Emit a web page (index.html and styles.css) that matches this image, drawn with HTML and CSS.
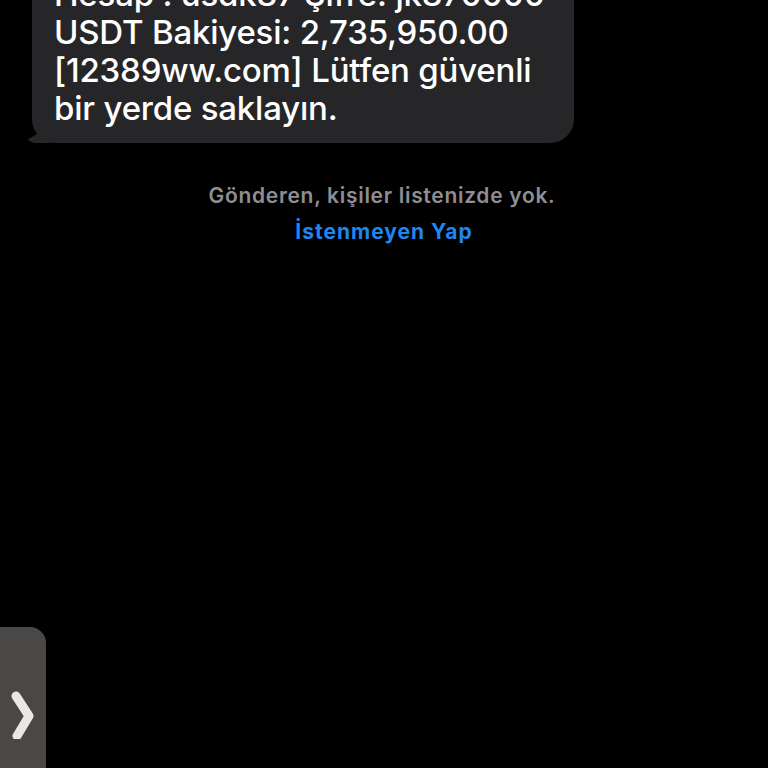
FILE: index.html
```html
<!DOCTYPE html>
<html lang="tr">
<head>
<meta charset="utf-8">
<link rel="stylesheet" href="styles.css">
</head>
<body>
<main class="thread">
  <div class="bubble">
    <span class="tail"></span>
    <p class="msg">Hesap : usdk87 Şifre: jk870000<br>USDT Bakiyesi: 2,735,950.00<br>[12389ww.com] Lütfen güvenli<br>bir yerde saklayın.</p>
  </div>
  <p class="notice">Gönderen, kişiler listenizde yok.</p>
  <a class="junk" href="#">İstenmeyen Yap</a>
</main>
<div class="drawer">
  <svg class="chev" width="30" height="60" viewBox="0 0 30 60"><path d="M8 17 L21 37 L9 57" fill="none" stroke="#e9e8e6" stroke-width="9" stroke-linecap="round" stroke-linejoin="round"/></svg>
</div>
</body>
</html>
```
FILE: styles.css
```css
html, body {
  margin: 0;
  padding: 0;
  background: #000;
  height: 768px;
  overflow: hidden;
}
body {
  font-family: Inter, "Noto Sans", "Liberation Sans", sans-serif;
  position: relative;
}
.thread {
  display: flex;
  flex-direction: column;
  align-items: center;
}
.bubble {
  align-self: flex-start;
  position: relative;
  margin: -37px 0 0 32px;
  width: 542px;
  box-sizing: border-box;
  padding: 12px 10px 16px 22px;
  background: #262628;
  border-radius: 24px;
}
.tail {
  position: absolute;
  left: -10px;
  bottom: 0;
  width: 30px;
  height: 18px;
  background: #262628;
  border-bottom-left-radius: 14px 18px;
  clip-path: polygon(0 100%, 100% 0, 100% 100%);
}
.msg {
  margin: 0;
  color: #fff;
  font-size: 33px;
  line-height: 38px;
  font-weight: 500;
  letter-spacing: -0.2px;
}
.notice {
  margin: 35px 0 0;
  color: #8e8e93;
  font-size: 21px;
  font-weight: 600;
  line-height: 36px;
  letter-spacing: 0.7px;
  padding-right: 4px;
}
.junk {
  color: #1f86f0;
  font-size: 21px;
  font-weight: 700;
  line-height: 36px;
  letter-spacing: 1px;
  text-decoration: none;
}
.drawer {
  position: absolute;
  left: 0;
  bottom: 0;
  width: 46px;
  height: 141px;
  background: #4a4846;
  border-top-right-radius: 16px;
}
.chev {
  position: absolute;
  left: 8px;
  top: 52px;
}
```
